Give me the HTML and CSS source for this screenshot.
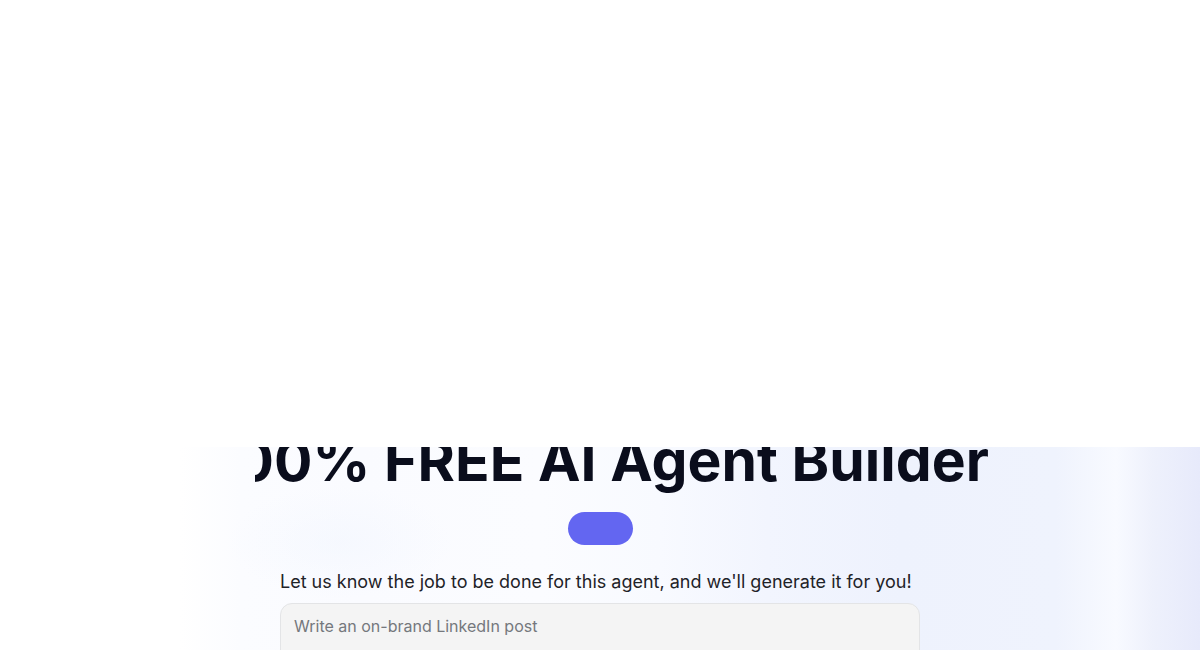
FILE: index.html
```html
<!DOCTYPE html>
<html lang="en">
<head>
<meta charset="utf-8">
<title>AI Agent Builder</title>
<link rel="stylesheet" href="styles.css">
</head>
<body>
<div class="top-space"></div>
<section class="hero">
  <div class="title-clip">
    <h1 class="title">100% FREE AI Agent Builder</h1>
  </div>
  <button class="cta" type="button" aria-label="Get started"></button>
  <div class="form">
    <p class="lead">Let us know the job to be done for this agent, and we'll generate it for you!</p>
    <textarea class="job" placeholder="Write an on-brand LinkedIn post"></textarea>
  </div>
</section>
</body>
</html>
```
FILE: styles.css
```css
* { box-sizing: border-box; }
html, body { margin: 0; padding: 0; background: #ffffff; }
body {
  font-family: Inter, "Noto Sans", sans-serif;
  color: #111827;
  overflow: hidden;
}
.top-space { height: 447px; background: #ffffff; }
.hero {
  min-height: 400px;
  display: flex;
  flex-direction: column;
  align-items: center;
  background:
    radial-gradient(ellipse 140px 70px at 340px 95px, rgba(240,245,254,0.45), rgba(255,255,255,0) 80%),
    linear-gradient(to right,
      #ffffff 0%,
      #ffffff 15%,
      #fbfcff 20%,
      #fafbff 30%,
      #fbfcff 45%,
      #f8faff 55%,
      #f2f5fe 64%,
      #eef2fd 75%,
      #eff3fd 88%,
      #f8faff 93%,
      #eef1fc 96%,
      #e7eafb 100%);
}
.title-clip {
  align-self: stretch;
  margin-left: 255px;
  overflow: hidden;
  padding-bottom: 8px;
}
.title {
  margin: -15px 0 0 -255px;
  width: 1200px;
  text-align: center;
  font-size: 57px;
  line-height: 57px;
  font-weight: 700;
  letter-spacing: 0.05px;
  color: #0a0d1c;
  white-space: nowrap;
}
.cta {
  margin-top: 15px;
  width: 65px;
  height: 33px;
  border: none;
  border-radius: 17px;
  background: #6366f1;
  cursor: pointer;
}
.form {
  width: 640px;
  margin-top: 23px;
}
.lead {
  margin: 0;
  font-size: 18px;
  line-height: 28px;
  color: #1f2328;
}
.job {
  display: block;
  width: 100%;
  height: 120px;
  margin-top: 7px;
  padding: 10px 13px;
  border: 1px solid #e3e4e6;
  border-radius: 12px;
  background: #f4f4f4;
  font-family: Inter, "Noto Sans", sans-serif;
  font-size: 16px;
  line-height: 24px;
  color: #111827;
  resize: none;
  outline: none;
}
.job::placeholder { color: #75787d; }
```
